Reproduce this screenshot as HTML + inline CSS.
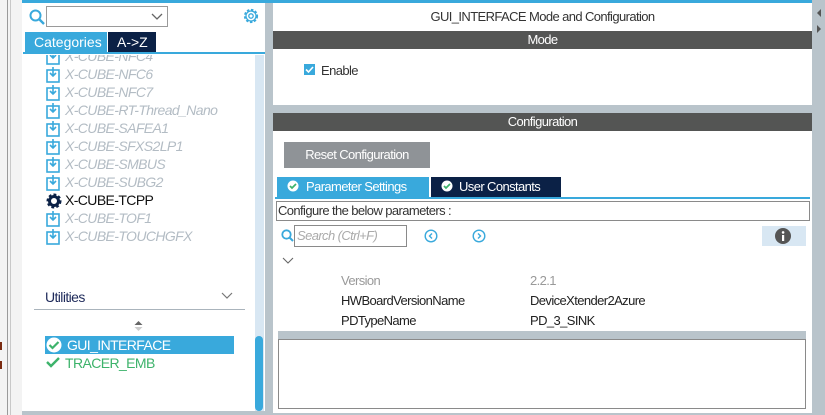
<!DOCTYPE html>
<html><head><style>
*{margin:0;padding:0;box-sizing:border-box}
body{width:825px;height:415px;overflow:hidden;position:relative;background:#b9c4cb;font-family:"Liberation Sans",sans-serif;font-size:13px;letter-spacing:-0.6px}
.a{position:absolute}
.it{position:absolute;left:23px;font-style:italic;color:#b3bcc4;font-size:14px;white-space:nowrap;width:200px;height:18px}
.it svg{position:absolute;left:0;top:1px}
.it span{position:absolute;left:19px;top:0}
.row{position:absolute;font-size:13px;color:#222;white-space:nowrap}
</style></head><body>
<div class="a" style="left:0;top:0;width:22px;height:415px;background:#f3f3f3"></div>
<div class="a" style="left:7px;top:0;width:1px;height:415px;background:#9a9a9a"></div>
<div class="a" style="left:10px;top:0;width:1px;height:415px;background:#c8c8c8"></div>
<div class="a" style="left:0;top:342px;width:2px;height:8px;background:#7a2a10"></div>
<div class="a" style="left:0;top:361px;width:2px;height:8px;background:#7a2a10"></div>
<div class="a" style="left:22px;top:0;width:243px;height:411px;background:#fff"></div>
<div class="a" style="left:22px;top:0;width:790px;height:3px;background:#39a9dc"></div>
<svg class="a" style="left:29px;top:9px" width="16" height="16"><circle cx="6.5" cy="6.5" r="5" fill="none" stroke="#39a9dc" stroke-width="2"/><path d="M10 10l5 5" stroke="#39a9dc" stroke-width="2.4"/></svg>
<div class="a" style="left:46px;top:6px;width:122px;height:21px;border:1px solid #9a9a9a;background:#fff"></div>
<svg class="a" style="left:151px;top:13px" width="12" height="8"><path d="M1 1l5 5 5-5" fill="none" stroke="#666" stroke-width="1.3"/></svg>
<svg class="a" style="left:242px;top:7px" width="18" height="18" viewBox="0 0 18 18"><circle cx="9" cy="9" r="6" fill="none" stroke="#39a9dc" stroke-width="2.2" stroke-dasharray="2.4 1.6"/><circle cx="9" cy="9" r="5" fill="none" stroke="#39a9dc" stroke-width="1.2"/><circle cx="9" cy="9" r="2.2" fill="none" stroke="#39a9dc" stroke-width="1.3"/></svg>
<div class="a" style="left:25px;top:32px;width:82px;height:20px;background:#39a9dc;color:#fff;font-size:14px;padding:2px 0 0 9px;letter-spacing:0">Categories</div>
<div class="a" style="left:108px;top:32px;width:48px;height:20px;background:#0b2146;color:#fff;font-size:14px;padding:2px 0 0 9px;letter-spacing:0">A-&gt;Z</div>
<div class="a" style="left:23px;top:52px;width:242px;height:2px;background:#39a9dc"></div>
<div class="a" style="left:255px;top:55px;width:9px;height:356px;background:#d8e7f3"></div>
<div class="a" style="left:255px;top:336px;width:8px;height:75px;background:#39a9dc;border-radius:4px"></div>
<div class="a" style="left:23px;top:55px;width:230px;height:200px;overflow:hidden">
<div class="it" style="top:-7px"><svg width="14" height="16"><rect x="1" y="3" width="12" height="12" fill="none" stroke="#39a9dc" stroke-width="1.6"/><path d="M7 0v9M4 6l3 3 3-3" fill="none" stroke="#39a9dc" stroke-width="1.6"/></svg><span>X-CUBE-NFC4</span></div>
<div class="it" style="top:11px"><svg width="14" height="16"><rect x="1" y="3" width="12" height="12" fill="none" stroke="#39a9dc" stroke-width="1.6"/><path d="M7 0v9M4 6l3 3 3-3" fill="none" stroke="#39a9dc" stroke-width="1.6"/></svg><span>X-CUBE-NFC6</span></div>
<div class="it" style="top:29px"><svg width="14" height="16"><rect x="1" y="3" width="12" height="12" fill="none" stroke="#39a9dc" stroke-width="1.6"/><path d="M7 0v9M4 6l3 3 3-3" fill="none" stroke="#39a9dc" stroke-width="1.6"/></svg><span>X-CUBE-NFC7</span></div>
<div class="it" style="top:47px"><svg width="14" height="16"><rect x="1" y="3" width="12" height="12" fill="none" stroke="#39a9dc" stroke-width="1.6"/><path d="M7 0v9M4 6l3 3 3-3" fill="none" stroke="#39a9dc" stroke-width="1.6"/></svg><span>X-CUBE-RT-Thread_Nano</span></div>
<div class="it" style="top:65px"><svg width="14" height="16"><rect x="1" y="3" width="12" height="12" fill="none" stroke="#39a9dc" stroke-width="1.6"/><path d="M7 0v9M4 6l3 3 3-3" fill="none" stroke="#39a9dc" stroke-width="1.6"/></svg><span>X-CUBE-SAFEA1</span></div>
<div class="it" style="top:83px"><svg width="14" height="16"><rect x="1" y="3" width="12" height="12" fill="none" stroke="#39a9dc" stroke-width="1.6"/><path d="M7 0v9M4 6l3 3 3-3" fill="none" stroke="#39a9dc" stroke-width="1.6"/></svg><span>X-CUBE-SFXS2LP1</span></div>
<div class="it" style="top:101px"><svg width="14" height="16"><rect x="1" y="3" width="12" height="12" fill="none" stroke="#39a9dc" stroke-width="1.6"/><path d="M7 0v9M4 6l3 3 3-3" fill="none" stroke="#39a9dc" stroke-width="1.6"/></svg><span>X-CUBE-SMBUS</span></div>
<div class="it" style="top:119px"><svg width="14" height="16"><rect x="1" y="3" width="12" height="12" fill="none" stroke="#39a9dc" stroke-width="1.6"/><path d="M7 0v9M4 6l3 3 3-3" fill="none" stroke="#39a9dc" stroke-width="1.6"/></svg><span>X-CUBE-SUBG2</span></div>
<div class="it" style="top:137px;font-style:normal;color:#111"><svg width="16" height="16" viewBox="0 0 16 16"><circle cx="8" cy="8" r="6" fill="none" stroke="#0b2146" stroke-width="3" stroke-dasharray="2.6 2"/><circle cx="8" cy="8" r="4.5" fill="none" stroke="#0b2146" stroke-width="3"/></svg><span>X-CUBE-TCPP</span></div>
<div class="it" style="top:155px"><svg width="14" height="16"><rect x="1" y="3" width="12" height="12" fill="none" stroke="#39a9dc" stroke-width="1.6"/><path d="M7 0v9M4 6l3 3 3-3" fill="none" stroke="#39a9dc" stroke-width="1.6"/></svg><span>X-CUBE-TOF1</span></div>
<div class="it" style="top:173px"><svg width="14" height="16"><rect x="1" y="3" width="12" height="12" fill="none" stroke="#39a9dc" stroke-width="1.6"/><path d="M7 0v9M4 6l3 3 3-3" fill="none" stroke="#39a9dc" stroke-width="1.6"/></svg><span>X-CUBE-TOUCHGFX</span></div>
</div>
<div class="a" style="left:45px;top:289px;font-size:14px;color:#1e2a5a">Utilities</div>
<svg class="a" style="left:221px;top:292px" width="12" height="8"><path d="M1 1l5 5 5-5" fill="none" stroke="#777" stroke-width="1.2"/></svg>
<div class="a" style="left:34px;top:309px;width:211px;height:1px;background:#aab4bc"></div>
<svg class="a" style="left:134px;top:321px" width="9" height="10"><path d="M4.5 0l4 4h-8z" fill="#666"/><path d="M4.5 10l4-4h-8z" fill="#ccc"/></svg>
<div class="a" style="left:45px;top:336px;width:189px;height:18px;background:#39a9dc"></div>
<svg class="a" style="left:46px;top:337px" width="16" height="16"><circle cx="8" cy="8" r="7.5" fill="#fff"/><path d="M3.5 8l3 3 6-6" fill="none" stroke="#3db36b" stroke-width="2.2"/></svg>
<div class="a" style="left:67px;top:337px;color:#fff;font-size:14px">GUI_INTERFACE</div>
<svg class="a" style="left:46px;top:356px" width="14" height="12"><path d="M1 6l4 4 8-8" fill="none" stroke="#3db36b" stroke-width="2.4"/></svg>
<div class="a" style="left:65px;top:355px;color:#3db36b;font-size:14px">TRACER_EMB</div>
<div class="a" style="left:273px;top:3px;width:539px;height:102px;background:#fff"></div>
<div class="a" style="left:273px;top:9px;width:539px;text-align:center;color:#333;font-size:13px">GUI_INTERFACE Mode and Configuration</div>
<div class="a" style="left:273px;top:31px;width:539px;height:18px;background:#545554;color:#fff;text-align:center;font-size:13px;line-height:18px">Mode</div>
<div class="a" style="left:304px;top:64px;width:11px;height:11px;background:#39a9dc"></div>
<svg class="a" style="left:304px;top:64px" width="11" height="11"><path d="M2 5.5l2.5 2.5 4.5-5" fill="none" stroke="#fff" stroke-width="1.6"/></svg>
<div class="a" style="left:321px;top:63px;color:#333;font-size:13px">Enable</div>
<div class="a" style="left:273px;top:113px;width:539px;height:300px;background:#fff"></div>
<div class="a" style="left:273px;top:113px;width:539px;height:18px;background:#545554;color:#fff;text-align:center;font-size:13px;line-height:18px">Configuration</div>
<div class="a" style="left:284px;top:142px;width:146px;height:26px;background:#8f9397;color:#fff;text-align:center;line-height:26px;font-size:13px">Reset Configuration</div>
<div class="a" style="left:277px;top:177px;width:152px;height:20px;background:#39a9dc;color:#fff;font-size:13px;line-height:20px;padding-left:29px">Parameter Settings</div>
<div class="a" style="left:431px;top:177px;width:130px;height:20px;background:#0b2146;color:#fff;font-size:13px;line-height:20px;padding-left:28px">User Constants</div>
<svg class="a" style="left:287px;top:180px" width="12" height="12"><circle cx="6" cy="6" r="5.5" fill="#fff"/><path d="M3 6l2 2 4-4" fill="none" stroke="#3db36b" stroke-width="1.7"/></svg>
<svg class="a" style="left:441px;top:180px" width="12" height="12"><circle cx="6" cy="6" r="5.5" fill="#fff"/><path d="M3 6l2 2 4-4" fill="none" stroke="#3db36b" stroke-width="1.7"/></svg>
<div class="a" style="left:275px;top:197px;width:535px;height:2px;background:#39a9dc"></div>
<div class="a" style="left:276px;top:201px;width:534px;height:20px;border:1px solid #8a8a8a;color:#333;font-size:13px;line-height:18px;padding-left:1px">Configure the below parameters :</div>
<svg class="a" style="left:281px;top:229px" width="13" height="14"><circle cx="5.5" cy="5.5" r="4.2" fill="none" stroke="#39a9dc" stroke-width="1.8"/><path d="M8.5 8.5l3.5 3.5" stroke="#39a9dc" stroke-width="2"/></svg>
<div class="a" style="left:294px;top:225px;width:113px;height:22px;border:1px solid #8a8a8a;color:#aaa;font-style:italic;font-size:13px;line-height:20px;padding-left:2px">Search (Ctrl+F)</div>
<svg class="a" style="left:424px;top:229px" width="14" height="14"><circle cx="7" cy="7" r="5.8" fill="none" stroke="#39a9dc" stroke-width="1.4"/><path d="M8 4.5l-2.5 2.5 2.5 2.5" fill="none" stroke="#39a9dc" stroke-width="1.4"/></svg>
<svg class="a" style="left:472px;top:229px" width="14" height="14"><circle cx="7" cy="7" r="5.8" fill="none" stroke="#39a9dc" stroke-width="1.4"/><path d="M6 4.5l2.5 2.5-2.5 2.5" fill="none" stroke="#39a9dc" stroke-width="1.4"/></svg>
<div class="a" style="left:762px;top:226px;width:44px;height:20px;background:#d8e7f3"></div>
<svg class="a" style="left:775px;top:228px" width="16" height="16"><circle cx="8" cy="8" r="8" fill="#555"/><rect x="7" y="7" width="2.2" height="6" fill="#fff"/><circle cx="8.1" cy="4.4" r="1.3" fill="#fff"/></svg>
<svg class="a" style="left:282px;top:257px" width="12" height="8"><path d="M1 1l5 5 5-5" fill="none" stroke="#666" stroke-width="1.1"/></svg>
<div class="row" style="left:341px;top:273px;color:#999">Version</div>
<div class="row" style="left:530px;top:273px;color:#999">2.2.1</div>
<div class="row" style="left:341px;top:293px">HWBoardVersionName</div>
<div class="row" style="left:530px;top:293px">DeviceXtender2Azure</div>
<div class="row" style="left:341px;top:313px">PDTypeName</div>
<div class="row" style="left:530px;top:313px">PD_3_SINK</div>
<div class="a" style="left:278px;top:331px;width:528px;height:8px;background:#b9c4cb"></div>
<div class="a" style="left:278px;top:339px;width:528px;height:70px;border:1px solid #8a8a8a;background:#fff"></div>
<svg class="a" style="left:813px;top:5px" width="12" height="30"><path d="M8 4l-4 4 4 4z" fill="#555"/><path d="M4 20l4 4-4 4z" fill="#555"/></svg>
</body></html>
